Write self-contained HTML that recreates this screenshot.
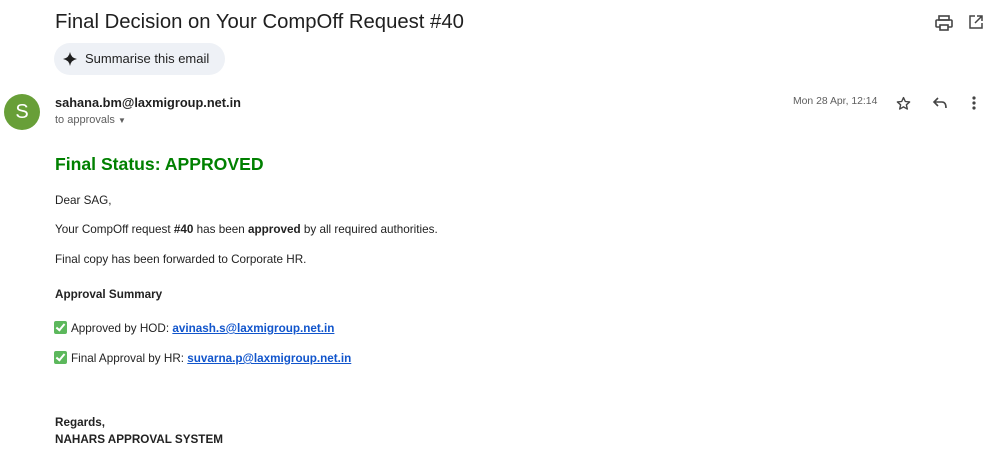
<!DOCTYPE html>
<html><head><meta charset="utf-8"><style>
body{margin:0;width:999px;height:457px;background:#fff;font-family:"Liberation Sans",Arial,sans-serif;position:relative;overflow:hidden;color:#222}
.a{position:absolute;white-space:nowrap}
.ck{display:inline-block;width:13px;height:13px;background:#5cb85c;border-radius:2px;vertical-align:-2px;margin-right:4px;position:relative}
.ck:after{content:"";position:absolute;left:4px;top:1px;width:3px;height:7px;border:solid #fff;border-width:0 2px 2px 0;transform:rotate(40deg)}
a{color:#1155cc;font-weight:bold;text-decoration:underline}
.b{font-size:11.7px}
</style></head><body>
<div class="a" style="left:55px;top:11px;font-size:20.3px;color:#1f1f1f">Final Decision on Your CompOff Request #40</div>
<div class="a" style="left:54px;top:43px;width:171px;height:32px;background:#eef1f6;border-radius:16px"></div>
<svg class="a" style="left:63px;top:52px" width="14" height="14" viewBox="0 0 14 14"><path d="M7 0 Q8 6 14 7 Q8 8 7 14 Q6 8 0 7 Q6 6 7 0Z" fill="#1f1f1f"/></svg>
<div class="a" style="left:85px;top:51px;font-size:13px;color:#1f1f1f">Summarise this email</div>
<svg class="a" style="left:935px;top:15px" width="18" height="16" viewBox="0 0 18 16"><rect x="4" y="1" width="10" height="4" fill="none" stroke="#444" stroke-width="1.6"/><rect x="1" y="5" width="16" height="7" rx="1" fill="none" stroke="#444" stroke-width="1.6"/><rect x="5" y="10" width="8" height="5" fill="#fff" stroke="#444" stroke-width="1.6"/></svg>
<svg class="a" style="left:969px;top:15px" width="14" height="14" viewBox="0 0 14 14"><path d="M6 1H1V13H13V8M8 1H13V6M13 1L6 8" fill="none" stroke="#444" stroke-width="1.5"/></svg>
<div class="a" style="left:4px;top:94px;width:36px;height:36px;border-radius:50%;background:#689f38;color:#fff;font-size:20px;text-align:center;line-height:36px">S</div>
<div class="a" style="left:55px;top:95px;font-size:12.8px;font-weight:bold;color:#1f1f1f">sahana.bm@laxmigroup.net.in</div>
<div class="a" style="left:55px;top:114px;font-size:11px;color:#5e5e5e">to approvals <span style="font-size:8px">▼</span></div>
<div class="a" style="left:793px;top:96px;font-size:10.4px;color:#5e5e5e">Mon 28 Apr, 12:14</div>
<svg class="a" style="left:896px;top:96px" width="15" height="15" viewBox="0 0 24 24"><path d="M12 2.5l2.9 6.3 6.9.7-5.2 4.6 1.5 6.8L12 17.4l-6.1 3.5 1.5-6.8L2.2 9.5l6.9-.7z" fill="none" stroke="#444" stroke-width="2.2" stroke-linejoin="round"/></svg>
<svg class="a" style="left:932px;top:96px" width="16" height="14" viewBox="0 0 16 14"><path d="M6 2L2 6L6 10M2 6H10Q14 6 14 12" fill="none" stroke="#444" stroke-width="1.6"/></svg>
<svg class="a" style="left:972px;top:96px" width="4" height="14"><circle cx="2" cy="2" r="1.6" fill="#444"/><circle cx="2" cy="7" r="1.6" fill="#444"/><circle cx="2" cy="12" r="1.6" fill="#444"/></svg>
<div class="a" style="left:55px;top:154px;font-size:17.6px;font-weight:bold;color:#008000">Final Status: APPROVED</div>
<div class="a b" style="left:55px;top:194px">Dear SAG,</div>
<div class="a b" style="left:55px;top:223px">Your CompOff request <b>#40</b> has been <b>approved</b> by all required authorities.</div>
<div class="a b" style="left:55px;top:253px">Final copy has been forwarded to Corporate HR.</div>
<div class="a b" style="left:55px;top:288px;font-weight:bold">Approval Summary</div>
<div class="a b" style="left:54px;top:321px"><span class="ck"></span>Approved by HOD: <a>avinash.s@laxmigroup.net.in</a></div>
<div class="a b" style="left:54px;top:351px"><span class="ck"></span>Final Approval by HR: <a>suvarna.p@laxmigroup.net.in</a></div>
<div class="a b" style="left:55px;top:414px;font-weight:bold;line-height:17px">Regards,<br>NAHARS APPROVAL SYSTEM</div>
</body></html>
